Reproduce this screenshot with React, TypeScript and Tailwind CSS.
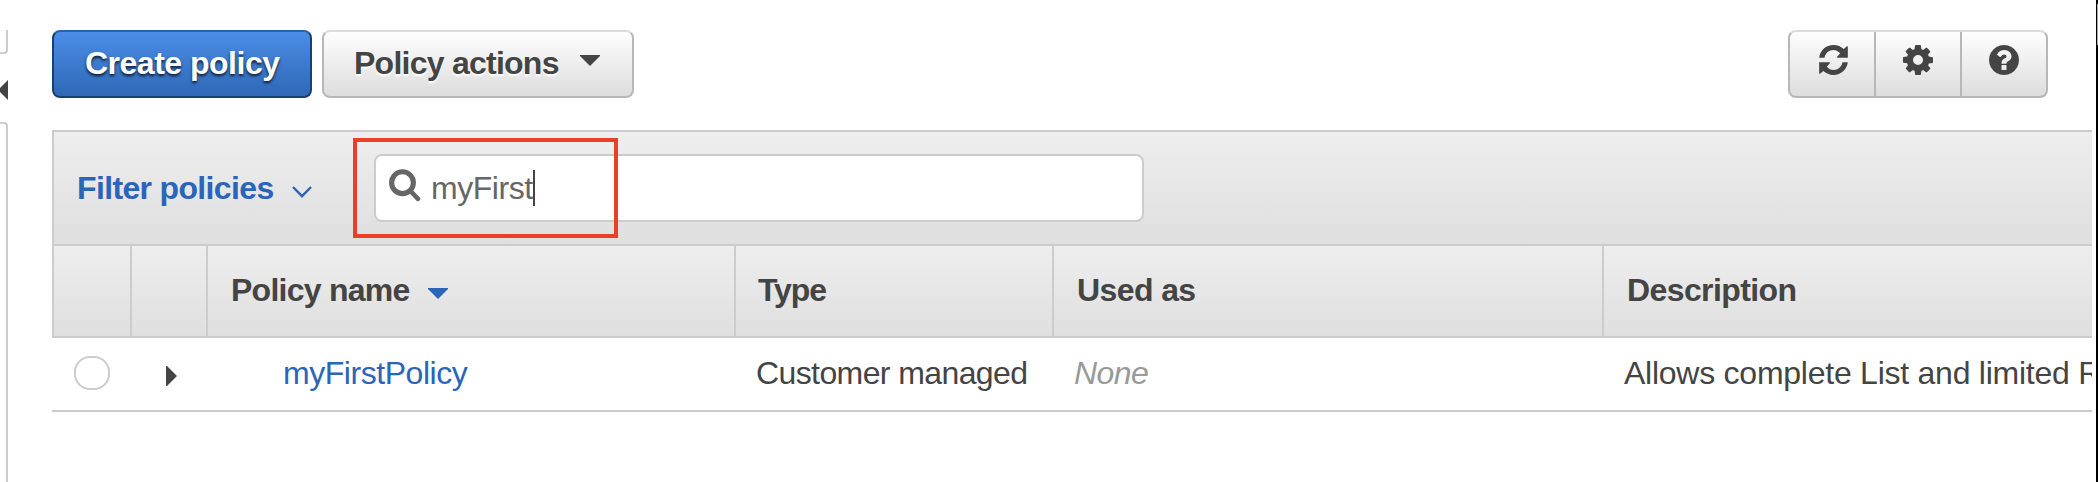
import type { ReactNode } from "react";

const COG =
  "M1152 896q0-106-75-181t-181-75-181 75-75 181 75 181 181 75 181-75 75-181zm512-109v222q0 12-8 23t-20 13l-185 28q-19 54-39 91 35 50 107 138 10 12 10 25t-9 23q-27 37-99 108t-94 71q-12 0-26-9l-138-108q-44 23-91 38-16 136-29 186-7 28-36 28h-222q-14 0-24.5-8.5t-11.5-21.5l-28-184q-49-16-90-37l-141 107q-10 9-25 9-14 0-25-11-126-114-165-168-7-10-7-23 0-12 8-23 15-21 51-66.5t54-70.5q-27-50-41-99l-183-27q-13-2-21-12.5t-8-23.5v-222q0-12 8-23t19-13l186-28q14-46 39-92-40-57-107-138-10-12-10-24 0-10 9-23 26-36 98.5-107.5t94.5-71.5q13 0 26 10l138 107q44-23 91-38 16-136 29-186 7-28 36-28h222q14 0 24.5 8.5t11.5 21.5l28 184q49 16 90 37l142-107q9-9 24-9 13 0 25 10 129 119 165 170 7 8 7 22 0 12-8 23-15 21-51 66.5t-54 70.5q26 50 41 98l183 28q13 2 21 12.5t8 23.5z";
const HELP =
  "M1024 1376v-192q0-14-9-23t-23-9h-192q-14 0-23 9t-9 23v192q0 14 9 23t23 9h192q14 0 23-9t9-23zm256-672q0-88-55.5-163t-138.5-116-170-41q-243 0-371 213-15 24 8 42l132 100q7 6 19 6 16 0 25-12 53-68 86-92 34-24 86-24 48 0 85.5 26t37.5 59q0 38-20 61t-68 45q-63 28-115.5 86.5t-52.5 125.5v36q0 14 9 23t23 9h192q14 0 23-9t9-23q0-19 21.5-49.5t54.5-49.5q32-18 49-28.5t46-35 44.5-48 28-60.5 12.5-81zm384 192q0 209-103 385.5t-279.5 279.5-385.5 103-385.5-103-279.5-279.5-103-385.5 103-385.5 279.5-279.5 385.5-103 385.5 103 279.5 279.5 103 385.5z";
const ARROW =
  "M0 38C3 16 20 0 43 0C55 0 66 5 74 12L83 4Q86 3 86 6V38H55Q52 38 54 35L63 25C58 19 51 15 43 15C29 15 19 24 16 38Z";

function ToolButton({ label, className, children }: { label: string; className: string; children: ReactNode }) {
  return (
    <button aria-label={label} className={`flex h-full justify-center pt-[13px] ${className}`}>
      {children}
    </button>
  );
}

function HeaderCell({ className, children }: { className: string; children?: ReactNode }) {
  return (
    <div className={`flex shrink-0 items-center border-[#ccc] pb-0.5 font-bold tracking-[-0.6px] whitespace-nowrap ${className}`}>
      {children}
    </div>
  );
}

function SidePanel() {
  return (
    <aside className="flex w-2 shrink-0 flex-col pt-[30px]">
      <div className="h-6 rounded-br-[4px] border-r-2 border-b-2 border-[#ccc]" />
      <svg viewBox="0 0 8 20" className="mt-[26px] h-5 w-2" fill="#444">
        <path d="M8 0V20L-2 10Z" />
      </svg>
      <div className="mt-[22px] grow rounded-tr-[4px] border-t-2 border-r-2 border-[#ccc]" />
    </aside>
  );
}

export default function App() {
  return (
    <div className="flex h-[482px] w-[2098px] overflow-hidden bg-white font-['Liberation_Sans',Arial,sans-serif] text-[32px] leading-9 text-[#444]">
      <SidePanel />
      <main className="ml-11 flex w-[2040px] shrink-0 flex-col overflow-hidden pt-[30px]">
        <div className="flex h-[68px] shrink-0">
          <button className="flex w-[260px] items-center rounded-lg border-2 border-[#1c3f70] border-t-[#2a61ae] bg-linear-to-b from-[#4b8fe8] to-[#2e67b5] bg-origin-border pb-0.5 pl-[31px] font-bold tracking-[-0.5px] whitespace-nowrap text-white [text-shadow:0_2px_3px_rgba(0,0,0,0.8)]">
            Create policy
          </button>
          <button className="ml-2.5 flex w-[312px] items-center rounded-lg border-2 border-[#b7b7b7] border-t-[#dcdcdc] bg-linear-to-b from-white to-[#dcdcdc] bg-origin-border pb-0.5 pl-[30px] font-bold tracking-[-0.75px] whitespace-nowrap [text-shadow:0_2px_2px_#fff]">
            <span className="w-[226px] text-left">Policy actions</span>
            <svg viewBox="0 0 20 11" className="mb-1.5 h-[11px] w-5 shrink-0" fill="#444">
              <path d="M0 0H20V1L10 11L0 1Z" />
            </svg>
          </button>
          <div className="mr-11 ml-auto flex w-[260px] rounded-lg border-2 border-[#b7b7b7] border-t-[#dcdcdc] bg-linear-to-b from-white to-[#dcdcdc] bg-origin-border">
            <ToolButton label="Refresh" className="w-[86px] border-r-2 border-[#b7b7b7] pl-[3px]">
              <svg viewBox="0 0 86 90" className="h-[30px] w-[29px]" fill="#444">
                <path d={ARROW} />
                <path d={ARROW} transform="rotate(180 43 45)" />
              </svg>
            </ToolButton>
            <ToolButton label="Settings" className="w-[86px] border-r-2 border-[#b7b7b7]">
              <svg viewBox="128 128 1536 1536" className="size-[30px]" fill="#444">
                <path d={COG} />
              </svg>
            </ToolButton>
            <ToolButton label="Help" className="w-[84px]">
              <svg viewBox="128 128 1536 1536" className="size-[30px]" fill="#444">
                <path d={HELP} />
              </svg>
            </ToolButton>
          </div>
        </div>

        <section className="mt-8">
          <div className="flex h-[116px] items-center border-2 border-r-0 border-[#ccc] bg-linear-to-b from-[#eee] to-[#dfdfdf] pl-[22px]">
            <button className="flex w-[298px] shrink-0 items-center pl-px font-bold tracking-[-0.65px] whitespace-nowrap text-[#2b65b9]">
              <span className="w-[215px] text-left">Filter policies</span>
              <svg viewBox="0 0 20 12" className="mt-2 h-3 w-5" fill="none" stroke="#2b65b9" strokeWidth="2.4">
                <path d="M1 1L10 10.2L19 1" />
              </svg>
            </button>
            <div className="relative flex h-[68px] w-[770px] items-center rounded-lg border-2 border-[#ccc] bg-white pl-[13px] text-[#666]">
              <svg viewBox="0 0 32 33" className="mb-1.5 h-[33px] w-8 shrink-0" fill="none" stroke="#666" strokeWidth="5.1" strokeLinecap="round">
                <circle cx="13.5" cy="13.7" r="10.9" />
                <path d="M21.5 22L29 29.8" strokeWidth="4.6" />
              </svg>
              <span className="ml-2.5 tracking-[-0.45px]">myFirst</span>
              <span className="h-9 w-0.5 bg-[#444]" />
              <div className="absolute -top-[18px] -left-[23px] h-[100px] w-[265px] border-4 border-[#e83f25]" />
            </div>
          </div>

          <div className="flex h-[92px] border-b-2 border-l-2 border-[#ccc] bg-linear-to-b from-[#eee] to-[#dfdfdf]">
            <HeaderCell className="w-[78px] border-r-2" />
            <HeaderCell className="w-[76px] border-r-2" />
            <HeaderCell className="w-[528px] border-r-2 pl-[23px]">
              <span className="w-[197px] tracking-[-0.75px]">Policy name</span>
              <svg viewBox="0 0 20 11" className="mt-1.5 h-[11px] w-5" fill="#2b65b9">
                <path d="M0 0H20V1L10 11L0 1Z" />
              </svg>
            </HeaderCell>
            <HeaderCell className="w-[318px] border-r-2 pl-[22px]">
              <span className="tracking-[-1.1px]">Type</span>
            </HeaderCell>
            <HeaderCell className="w-[550px] border-r-2 pl-[23px]">Used as</HeaderCell>
            <HeaderCell className="pl-[23px]">Description</HeaderCell>
          </div>

          <div className="flex h-[74px] items-center border-b-2 border-[#ccc] pb-0.5 whitespace-nowrap">
            <div className="w-20 shrink-0 pl-[22px]">
              <div className="h-[34px] w-9 rounded-[16px] border-2 border-[#ccc]" />
            </div>
            <div className="w-[76px] shrink-0 pl-[34px]">
              <svg viewBox="0 0 11 20" className="mt-1.5 h-5 w-[11px]" fill="#444">
                <path d="M0 0H1L11 10L1 20H0Z" />
              </svg>
            </div>
            <a className="w-[528px] shrink-0 pl-[75px] tracking-[-0.45px] text-[#2b65b9]">myFirstPolicy</a>
            <span className="w-[318px] shrink-0 pl-5 tracking-[-0.6px]">Customer managed</span>
            <em className="w-[550px] shrink-0 pl-5 tracking-[-0.6px] text-[#999]">None</em>
            <span className="pl-5 tracking-[-0.25px]">Allows complete List and limited Read</span>
          </div>
        </section>
      </main>
      <div className="ml-auto flex w-0.5 flex-col bg-black pt-1 pl-px">
        <div className="h-[41px] bg-[#aaa]" />
      </div>
    </div>
  );
}
